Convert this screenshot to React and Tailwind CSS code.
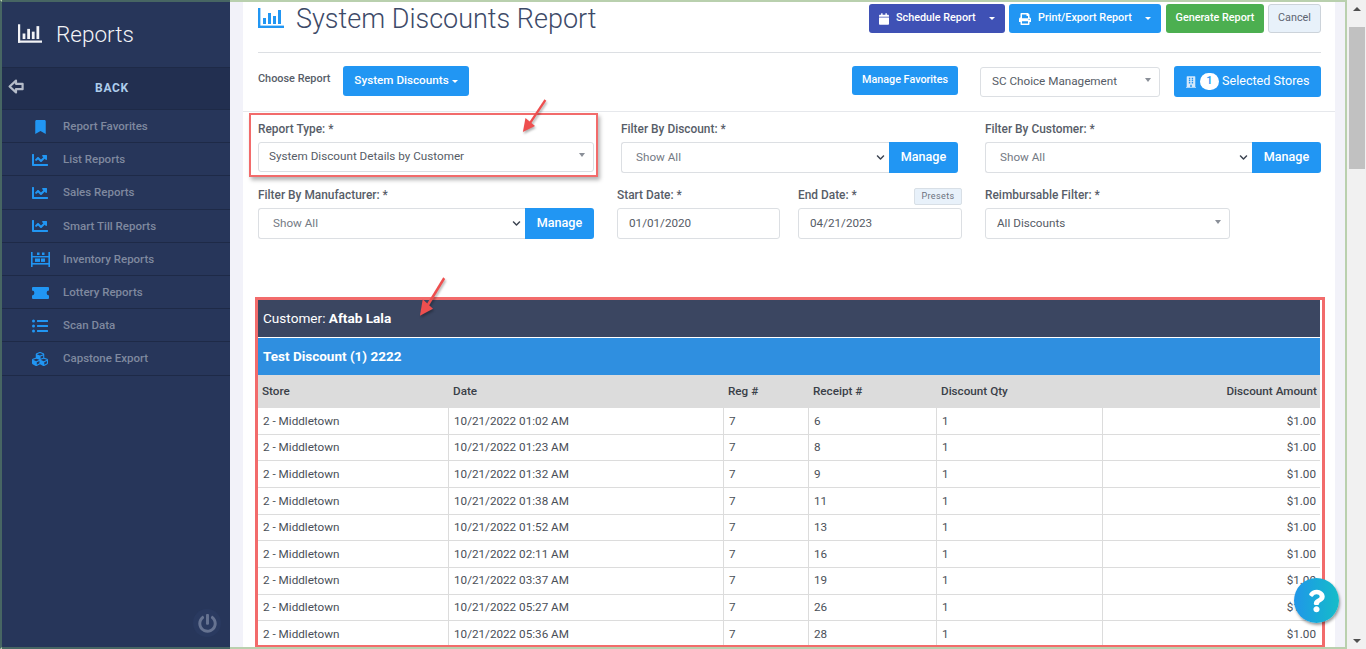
import React from "react";
import { FaBookmark, FaChartLine, FaListUl, FaCubes, FaCalendar, FaPrint, FaBuilding, FaQuestion, FaPowerOff, FaChevronDown } from "react-icons/fa";

const font = { fontFamily: "Roboto, 'Liberation Sans', sans-serif" };

function BarsIcon({ className }) {
  return (
    <svg viewBox="0 0 26 20" className={className} fill="currentColor">
      <rect x="0" y="0" width="2.4" height="20" />
      <rect x="0" y="17.6" width="26" height="2.4" />
      <rect x="5" y="10" width="3" height="6" />
      <rect x="10" y="5" width="3" height="11" />
      <rect x="15" y="8" width="3" height="8" />
      <rect x="20" y="2" width="3" height="14" />
    </svg>
  );
}

function InventoryIcon() {
  return (
    <svg viewBox="0 0 19 15" className="w-[19px] h-[15px]" fill="#2196f3">
      <rect x="0" y="0" width="1.6" height="15" />
      <rect x="17.4" y="0" width="1.6" height="15" />
      <rect x="0" y="11" width="19" height="1.6" />
      <rect x="0" y="4" width="19" height="1.4" />
      <rect x="4" y="6.5" width="5" height="3.4" />
      <rect x="10" y="6.5" width="4" height="3.4" />
      <rect x="6" y="0.5" width="2.5" height="2.5" />
      <rect x="11" y="0.5" width="2.5" height="2.5" />
    </svg>
  );
}

function TicketIcon() {
  return (
    <svg viewBox="0 0 17 12" className="w-[17px] h-[12px]" fill="#2196f3">
      <path d="M1 0 H16 A1 1 0 0 1 17 1 V3.6 A2.4 2.4 0 0 0 17 8.4 V11 A1 1 0 0 1 16 12 H1 A1 1 0 0 1 0 11 V8.4 A2.4 2.4 0 0 0 0 3.6 V1 A1 1 0 0 1 1 0 Z" />
    </svg>
  );
}

function BackIcon() {
  return (
    <svg viewBox="0 0 16 15" className="w-[16px] h-[15px]" fill="none" stroke="#b5bcc9" strokeWidth="2.2">
      <path d="M8 1.6 L1.6 7.5 L8 13.4 V10.2 H14.6 V4.8 H8 Z" strokeLinejoin="round" />
    </svg>
  );
}

const navItems = [
  ["Report Favorites", <FaBookmark className="w-[11px] h-[14px]" />],
  ["List Reports", <FaChartLine className="w-[16px] h-[16px]" />],
  ["Sales Reports", <FaChartLine className="w-[16px] h-[16px]" />],
  ["Smart Till Reports", <FaChartLine className="w-[16px] h-[16px]" />],
  ["Inventory Reports", <InventoryIcon />],
  ["Lottery Reports", <TicketIcon />],
  ["Scan Data", <FaListUl className="w-[16px] h-[16px]" />],
  ["Capstone Export", <FaCubes className="w-[16px] h-[16px]" />],
];

function Sidebar() {
  return (
    <aside className="relative w-[228px] shrink-0 -my-[2px] border-y-[2px] border-[#476663] bg-[#27365a] flex flex-col">
      <div className="h-[65px] shrink-0 flex items-center pl-[16px] gap-[14px] text-[#f2f3f6]">
        <BarsIcon className="w-[24px] h-[19px] mb-[3px]" />
        <span className="text-[22.5px] font-light leading-none">Reports</span>
      </div>
      <div className="h-[43px] shrink-0 bg-[#222f50] border-y border-[#1e2a47] flex items-center relative">
        <span className="absolute left-[6px] top-[11px] flex"><BackIcon /></span>
        <span className="w-full text-center text-[12px] font-bold tracking-[0.7px] text-[#aecdec] pr-[8px] pb-[1px]">BACK</span>
      </div>
      {navItems.map(([label, icon]) => (
        <div key={label} className="h-[33.2px] shrink-0 flex items-center pt-[1px] border-b border-[#1e2a47] text-[#7f899f] text-[11.5px] font-medium">
          <span className="w-[61px] pl-[21px] pr-[6px] flex justify-center text-[#2196f3] shrink-0">{icon}</span>
          <span>{label}</span>
        </div>
      ))}
      <div className="absolute left-[191px] bottom-[10px] w-[28px] h-[28px] rounded-full bg-[#2a3a60] flex items-center justify-center text-[#667391]">
        <FaPowerOff className="w-[19px] h-[19px]" />
      </div>
    </aside>
  );
}

function Label({ children }) {
  return <div className="text-[11.9px] font-medium text-[#575d68] leading-[14px]">{children}</div>;
}

function Caret({ className = "" }) {
  return <span className={"w-0 h-0 border-x-[3px] border-x-transparent border-t-[4px] border-t-[#8a8f98] " + className} />;
}

function PlainSelect({ text, className = "" }) {
  return (
    <div className={"bg-white border border-[#dcdfe3] rounded-[3px] flex items-center justify-between pr-[8px] text-[11.7px] text-[#565c66] " + className}>
      <span>{text}</span>
      <Caret className="mb-[4px]" />
    </div>
  );
}

function ManageSelect({ className = "" }) {
  return (
    <div className={"flex h-[31px] " + className}>
      <div className="flex-1 bg-white border border-[#dcdfe3] border-r-0 rounded-l-[3px] flex items-center justify-between pl-[14px] pr-[2px] text-[11.7px] text-[#747a84]">
        <span>Show All</span>
        <FaChevronDown className="w-[11px] h-[9px] text-[#3c4350] mr-[1px]" />
      </div>
      <button className="w-[69px] bg-[#2196f3] text-white text-[12.6px] font-medium rounded-r-[3px]">Manage</button>
    </div>
  );
}

function DateInput({ value, className = "" }) {
  return (
    <div className={"bg-white border border-[#dcdfe3] rounded-[3px] flex items-center pl-[11px] text-[11.7px] text-[#565c66] " + className}>
      {value}
    </div>
  );
}

const columns = [
  ["Store", "w-[191px]"],
  ["Date", "w-[275px]"],
  ["Reg #", "w-[85px]"],
  ["Receipt #", "w-[128px]"],
  ["Discount Qty", "w-[166px]"],
  ["Discount Amount", "flex-1 text-right"],
];

const rows = [
  ["10/21/2022 01:02 AM", "6"],
  ["10/21/2022 01:23 AM", "8"],
  ["10/21/2022 01:32 AM", "9"],
  ["10/21/2022 01:38 AM", "11"],
  ["10/21/2022 01:52 AM", "13"],
  ["10/21/2022 02:11 AM", "16"],
  ["10/21/2022 03:37 AM", "19"],
  ["10/21/2022 05:27 AM", "26"],
  ["10/21/2022 05:36 AM", "28"],
];

function ReportTable() {
  return (
    <div className="mt-[60px] mx-[15px]">
      <div className="h-[39px] bg-[#3b4661] border-b border-white text-white text-[13.6px] flex items-center pl-[5px]">
        <span>Customer:&nbsp;</span><span className="font-bold">Aftab Lala</span>
      </div>
      <div className="h-[37px] bg-[#2f8fe0] text-white text-[13.5px] font-bold flex items-center pl-[5px]">Test Discount (1) 2222</div>
      <div className="h-[33px] bg-[#dcdcdc] flex items-center text-[11.7px] font-medium text-[#3a3f48]">
        {columns.map(([label, w]) => (
          <div key={label} className={w + " pl-[4px] pr-[3px]"}>{label}</div>
        ))}
      </div>
      {rows.map(([date, receipt]) => (
        <div key={date} className="h-[26.67px] flex border-b border-[#dcdcdc] text-[11.7px] text-[#4a4f58]">
          <div className="w-[191px] pl-[5px] pt-[1px] border-r border-[#dcdcdc] flex items-center">2 - Middletown</div>
          <div className="w-[275px] pl-[5px] pt-[1px] border-r border-[#dcdcdc] flex items-center">{date}</div>
          <div className="w-[85px] pl-[5px] pt-[1px] border-r border-[#dcdcdc] flex items-center">7</div>
          <div className="w-[128px] pl-[5px] pt-[1px] border-r border-[#dcdcdc] flex items-center">{receipt}</div>
          <div className="w-[166px] pl-[5px] pt-[1px] border-r border-[#dcdcdc] flex items-center">1</div>
          <div className="flex-1 pr-[4px] pt-[1px] flex items-center justify-end">$1.00</div>
        </div>
      ))}
    </div>
  );
}

function SplitButton({ icon, label, bg, className }) {
  return (
    <button className={"h-[29px] rounded-[3px] text-white text-[10.8px] font-medium flex items-center pl-[10px] pr-[10px] " + bg + " " + className}>
      {icon}
      <span className="ml-[7px] flex-1 text-left">{label}</span>
      <span className="w-0 h-0 border-x-[3px] border-x-transparent border-t-[3px] border-t-white" />
    </button>
  );
}

function Arrow({ className }) {
  return (
    <svg viewBox="0 0 30 34" preserveAspectRatio="none" className={"absolute " + className} style={{ filter: "drop-shadow(1px 2px 1px rgba(0,0,0,0.3))" }} fill="none">
      <path d="M27 1 L7 27" stroke="#ee4f4f" strokeWidth="2.6" />
      <path d="M1 33 L4 19 L15 27 Z" fill="#ee4f4f" />
    </svg>
  );
}

function Main() {
  return (
    <main className="relative w-[1092px] ml-[13px] bg-white overflow-hidden">
      <div className="h-[51px] ml-[15px] mr-[14px] border-b border-[#dcdfe3] flex">
        <div className="flex items-start pt-[6px] text-[#2196f3]">
          <BarsIcon className="w-[26px] h-[20px]" />
        </div>
        <span className="ml-[12px] text-[27px] font-light text-[#3d4a68] leading-[34px]">System Discounts Report</span>
        <div className="ml-auto flex items-start pt-[2px]">
          <SplitButton bg="bg-[#3f51b5]" className="w-[136px]" label="Schedule Report" icon={<FaCalendar className="w-[10px] h-[12px]" />} />
          <SplitButton bg="bg-[#2196f3]" className="w-[152px] ml-[4px]" label="Print/Export Report" icon={<FaPrint className="w-[12px] h-[12px]" />} />
          <button className="w-[98px] ml-[5px] h-[29px] rounded-[3px] bg-[#4caf50] text-white text-[10.8px] font-medium">Generate Report</button>
          <button className="w-[53px] ml-[4px] h-[29px] rounded-[3px] bg-[#e8f1fa] border border-[#ccd3da] text-[#5d6470] text-[10.8px]">Cancel</button>
        </div>
      </div>
      <div className="h-[59px] flex items-start pt-[13px] border-b border-[#e6e8ec] pl-[15px] pr-[14px]">
        <span className="text-[10.9px] font-medium text-[#575d68] w-[85px] mt-[5px]">Choose Report</span>
        <button className="w-[126px] h-[30px] bg-[#2196f3] text-white text-[11.7px] font-medium rounded-[3px] flex items-center justify-center gap-[3px]">
          System Discounts
          <span className="w-0 h-0 border-x-[3px] border-x-transparent border-t-[3px] border-t-white" />
        </button>
        <button className="ml-auto w-[106px] h-[29px] bg-[#2196f3] text-white text-[10.8px] font-medium rounded-[3px]">Manage Favorites</button>
        <PlainSelect text="SC Choice Management" className="w-[180px] h-[30px] ml-[22px] mt-[1px] pl-[11px]" />
        <button className="w-[147px] h-[31px] ml-[14px] bg-[#2196f3] text-white text-[12.6px] rounded-[3px] flex items-center pl-[12px]">
          <FaBuilding className="w-[10px] h-[14px] text-[#d5e9fb]" />
          <span className="w-[19px] h-[17px] ml-[4px] rounded-full bg-white text-[#2196f3] text-[11px] font-medium flex items-center justify-center">1</span>
          <span className="ml-[3px]">Selected Stores</span>
        </button>
      </div>
      <div className="pl-[15px] pr-[14px] pt-[10px]">
        <div className="flex gap-[27px]">
          <div className="w-[336px]">
            <Label>Report Type: *</Label>
            <PlainSelect text="System Discount Details by Customer" className="mt-[6px] h-[30px] pl-[10px]" />
          </div>
          <div className="w-[337px]">
            <Label>Filter By Discount: *</Label>
            <ManageSelect className="mt-[6px]" />
          </div>
          <div className="w-[336px]">
            <Label>Filter By Customer: *</Label>
            <ManageSelect className="mt-[6px]" />
          </div>
        </div>
        <div className="flex mt-[15px] items-start">
          <div className="w-[336px]">
            <Label>Filter By Manufacturer: *</Label>
            <ManageSelect className="mt-[6px]" />
          </div>
          <div className="w-[163px] ml-[23px]">
            <Label>Start Date: *</Label>
            <DateInput value="01/01/2020" className="mt-[6px] h-[31px]" />
          </div>
          <div className="w-[164px] ml-[18px]">
            <div className="flex justify-between items-start h-[14px]">
              <Label>End Date: *</Label>
              <span className="h-[17px] w-[48px] bg-[#e8f1fa] border border-[#d8dfe6] rounded-[2px] text-[9px] tracking-[0.4px] text-[#6b727d] flex items-center justify-center">Presets</span>
            </div>
            <DateInput value="04/21/2023" className="mt-[6px] h-[31px]" />
          </div>
          <div className="w-[245px] ml-[23px]">
            <Label>Reimbursable Filter: *</Label>
            <PlainSelect text="All Discounts" className="mt-[6px] h-[31px] pl-[11px]" />
          </div>
        </div>
      </div>
      <ReportTable />
      <div className="absolute left-[6px] top-[111px] w-[349px] h-[64px] border-[2px] border-[#f26b6b] shadow-[2px_3px_4px_rgba(0,0,0,0.3)]" />
      <div className="absolute left-[12px] top-[295px] w-[1070px] h-[351px] border-[3px] border-[#f26b6b]" />
      <Arrow className="left-[279px] top-[97px] w-[26px] h-[34px]" />
      <Arrow className="left-[176px] top-[275px] w-[28px] h-[40px]" />
    </main>
  );
}

function Scrollbar() {
  return (
    <div className="w-[19px] shrink-0 bg-[#f1f1f1] flex flex-col items-center">
      <div className="h-[17px] flex items-center justify-center">
        <span className="w-0 h-0 border-x-[4px] border-x-transparent border-b-[4px] border-b-[#505050]" />
      </div>
      <div className="w-[16px] h-[142px] mt-[10px] bg-[#c1c1c1]" />
      <div className="mt-auto h-[17px] flex items-center justify-center">
        <span className="w-0 h-0 border-x-[4px] border-x-transparent border-t-[4px] border-t-[#505050]" />
      </div>
    </div>
  );
}

export default function App() {
  return (
    <div style={font} className="w-[1366px] h-[649px] flex overflow-hidden bg-[#f1f1f1]">
      <div className="w-[1347px] h-[649px] border-[2px] border-l-[#476663] border-[#b9d0ae] bg-[#f2f2f9] flex">
        <Sidebar />
        <Main />
      </div>
      <Scrollbar />
      <div className="fixed left-[1294px] top-[578px] w-[45px] h-[45px] rounded-full bg-gradient-to-r from-[#2196e8] to-[#17bcc8] shadow-[1px_2px_3px_rgba(0,0,0,0.4)] flex items-center justify-center">
        <FaQuestion className="w-[17px] h-[26px] text-white" />
      </div>
    </div>
  );
}
